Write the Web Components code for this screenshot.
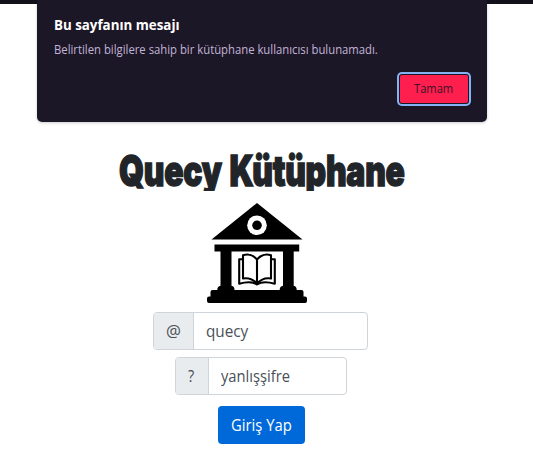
<!DOCTYPE html>
<html lang="tr"><head><meta charset="utf-8"><title>Quecy Kütüphane</title>
<style>html,body{margin:0;height:100%;background:#fff;overflow:hidden}</style></head>
<body><library-page></library-page>
<script>
const define=(name,html,ready)=>customElements.define(name,class extends HTMLElement{
  connectedCallback(){
    if(!this.shadowRoot)this.attachShadow({mode:'open'}).innerHTML=html;
    if(ready)ready(this);
  }
});

// Text squeezed or stretched horizontally to the width given by its attribute.
define('fit-text',`<style>:host{display:block;white-space:nowrap}span{display:inline-block;transform-origin:0 50%}</style><span><slot></slot></span>`,el=>{
  const s=el.shadowRoot.querySelector('span'),w=+el.getAttribute('width');
  el.style.width=w+'px';
  s.style.transform='scaleX('+w/s.offsetWidth+')';
});

define('alert-button',`<style>
:host{display:flex;box-sizing:border-box;width:68px;height:28px;align-items:center;justify-content:center;background:#ff1f4f;color:#3a1228;border-radius:2px;box-shadow:0 0 0 1px #1c1726,0 0 0 3px #86b2f5;font-size:12px;line-height:16px}
::slotted(*){margin-left:-1px}
</style><slot></slot>`);

define('page-alert',`<style>
:host{display:flex;flex-direction:column;box-sizing:border-box;width:450px;height:122px;padding:15px 19px 19px 17px;background:#1c1726;border-radius:0 0 5px 5px;box-shadow:0 1px 3px #0003;color:#c2b4d8;font-size:12px;line-height:16px}
.title{font-size:14.5px;line-height:20px;font-weight:700;color:#fff}
.message{margin-top:7px}
.actions{display:flex;justify-content:flex-end;margin-top:auto}
</style><div class="title"><slot name="title"></slot></div><div class="message"><slot></slot></div><div class="actions"><slot name="action"></slot></div>`);

define('library-logo',`<style>:host{display:block;width:100px;height:100px}svg{display:block}</style>
<svg width="100" height="100" viewBox="0 0 100 100">
<path d="M50 0 95.500 36.500H4.500Z"/><circle cx="50" cy="22.300" r="9.800" fill="#fff"/><circle cx="50" cy="22.300" r="4.800"/>
<path d="M7.500 41.500H92.200V48.500H86.700V82.700Q89.700 83 89.700 87H94.500Q96.500 87 96.500 89V93.500H98Q100 93.500 100 95.500V98Q100 100 98 100H2Q0 100 0 98V95.500Q0 93.500 2 93.500H3.500V89Q3.500 87 5.500 87H10.300Q10.300 83 13.500 82.700V48.500H7.500Z"/>
<path fill="#fff" d="M24.500 48.500H76V82.700Q72.700 83 72.700 87H27.500Q27.500 83 24.500 82.700Z"/>
<g fill="none" stroke="#000" stroke-width="2.100" stroke-linejoin="round"><path d="M50 56.500Q44 49.500 36 52.200V75.500Q44 74 50 80.500Q56 74 64 75.500V52.200Q56 49.500 50 56.500V80.500"/><path d="M36 56.300H32.200V80.800Q44 77.500 50 81.500Q56 77.500 67.800 80.800V56.300H64"/></g>
</svg>`);

define('input-group',`<style>
:host{display:flex;box-sizing:border-box;height:38px;border:1px solid #ced4da;border-radius:4px;overflow:hidden;background:#fff;color:#495057;font-size:16px;line-height:24px}
.addon{display:flex;align-items:center;justify-content:center;box-sizing:border-box;width:var(--addon-width,40px);background:#e9ecef;border-right:1px solid #ced4da;font-size:15.5px}
.value{display:flex;align-items:center;padding:0 12px}
</style><div class="addon"><slot name="addon"></slot></div><div class="value"><slot></slot></div>`);

define('submit-button',`<style>
:host{display:flex;align-items:center;justify-content:center;width:87px;height:38px;border-radius:4px;background:#0069d9;color:#fff;font-size:16px;line-height:24px}
</style><slot></slot>`);

define('library-page',`<style>
:host{display:flex;flex-direction:column;width:533px;height:471px;font-family:"Open Sans","Noto Sans",sans-serif;color:#212529}
header{display:flex;padding-left:37px;height:122px;background:linear-gradient(#12101a 4px,#fff 4px)}
main{display:flex;flex-direction:column;width:521px;align-items:center}
h1{margin:23px 0 0 2px;height:58px;font-family:Inter,"Open Sans",sans-serif;font-size:42.5px;line-height:52px;font-weight:900;letter-spacing:-.3px;word-spacing:2px;-webkit-text-stroke:1.5px #212529;clip-path:inset(0 -4px 12px -4px)}
library-logo{margin-left:-7px}
.user{width:215px;margin-top:9px}.pass{width:172px;margin:7px 0 11px;--addon-width:33px}
submit-button{margin-left:2px}
</style>
<header><page-alert><fit-text slot="title" width="126">Bu sayfanın mesajı</fit-text><fit-text width="324">Belirtilen bilgilere sahip bir kütüphane kullanıcısı bulunamadı.</fit-text><alert-button slot="action"><fit-text width="39">Tamam</fit-text></alert-button></page-alert></header>
<main><h1><fit-text width="286">Quecy Kütüphane</fit-text></h1><library-logo></library-logo>
<input-group class="user"><fit-text slot="addon" width="15">@</fit-text><fit-text width="42">quecy</fit-text></input-group>
<input-group class="pass"><fit-text slot="addon" width="6.500">?</fit-text><fit-text width="69">yanlışşifre</fit-text></input-group>
<submit-button><fit-text width="61">Giriş Yap</fit-text></submit-button></main>`);
</script></body></html>
